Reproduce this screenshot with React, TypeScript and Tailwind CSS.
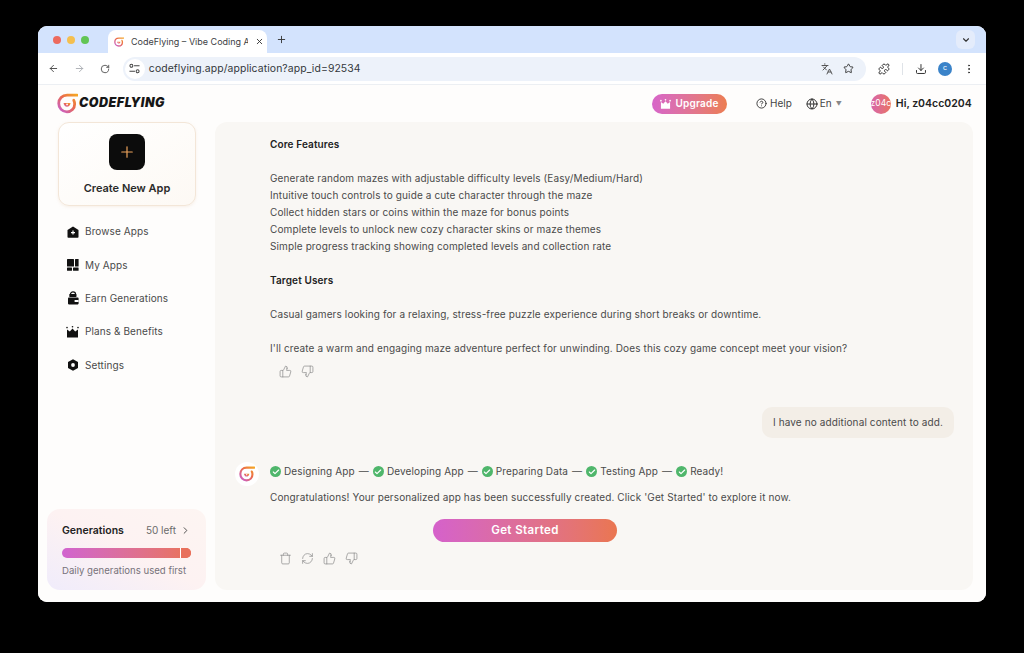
import React from 'react';
import {
  ArrowLeft,
  ArrowRight,
  RotateCw,
  Star,
  Puzzle,
  Download,
  EllipsisVertical,
  ChevronDown,
  ChevronRight,
  Plus,
  X,
  CircleHelp,
  Globe,
  ThumbsUp,
  ThumbsDown,
  Trash,
  RefreshCw,
  Check,
  Languages,
} from 'lucide-react';

const Logo = ({ size = 20 }: { size?: number }) => (
  <svg width={size} height={size} viewBox="0 0 24 24" fill="none">
    <defs>
      <linearGradient id="logoGrad" x1="0" y1="1" x2="1" y2="0">
        <stop offset="0" stopColor="#c65fd6" />
        <stop offset="0.55" stopColor="#ea6a4d" />
        <stop offset="1" stopColor="#f5a623" />
      </linearGradient>
    </defs>
    <path
      d="M23 2.5H11.5C6 2.5 2 6.5 2 12c0 5.3 4 9.5 9.3 9.5 5.2 0 8.9-3.9 8.9-9 0-1.6-.4-3-1-4.2"
      stroke="url(#logoGrad)"
      strokeWidth="3.2"
      strokeLinecap="round"
    />
    <path d="M7.5 11.5h8c-.3 2.6-2 4.3-4.2 4.3-2 0-3.5-1.8-3.8-4.3z" fill="url(#logoGrad)" />
    <circle cx="11.5" cy="13" r="1" fill="#fff" />
  </svg>
);

const BrowseIcon = () => (
  <svg width="12" height="12" viewBox="0 0 12 12" fill="#111">
    <path d="M6 .5l5.5 3.6V11a.8.8 0 0 1-.8.8H1.3A.8.8 0 0 1 .5 11V4.1L6 .5z" />
    <path d="M6 4.6v4M4 6.6h4" stroke="#fff" strokeWidth="1.2" />
  </svg>
);

const MyAppsIcon = () => (
  <svg width="12" height="12" viewBox="0 0 12 12" fill="#111">
    <rect x="0" y="0" width="7" height="7.4" rx=".5" />
    <rect x="8" y="0" width="3.6" height="7.4" rx=".5" />
    <rect x="0" y="8.4" width="5" height="3.4" rx=".5" />
    <rect x="6" y="8.4" width="5.6" height="3.4" rx=".5" />
  </svg>
);

const EarnIcon = () => (
  <svg width="12" height="14" viewBox="0 0 12 14" fill="#111">
    <path d="M3.4 5V3.4a2.6 2.6 0 0 1 5.2 0V5z" fill="none" stroke="#111" strokeWidth="1.2" />
    <rect x="2.4" y="3" width="7" height="3" rx=".5" />
    <rect x="1" y="6.6" width="10.6" height="6.8" rx=".8" />
    <rect x="7.6" y="9" width="4" height="2" fill="#fff" />
  </svg>
);

const PlansIcon = () => (
  <svg width="13" height="12" viewBox="0 0 13 12" fill="#111">
    <circle cx="1" cy="1.6" r=".8" />
    <circle cx="6.5" cy=".8" r=".8" />
    <circle cx="12" cy="1.6" r=".8" />
    <path d="M1 3.4l2.8 2.2L6.5 2.4l2.7 3.2L12 3.4v8.2H1z" />
  </svg>
);

const SettingsIcon = () => (
  <svg width="12" height="12" viewBox="0 0 12 12">
    <path d="M6 .2l5 2.9v5.8l-5 2.9-5-2.9V3.1z" fill="#111" />
    <circle cx="6" cy="6" r="1.9" fill="#fff" />
  </svg>
);

const Crown = () => (
  <svg width="11" height="10" viewBox="0 0 13 12" fill="#fff">
    <circle cx="1" cy="2" r="1" />
    <circle cx="6.5" cy="1" r="1" />
    <circle cx="12" cy="2" r="1" />
    <path d="M1 3.6l2.8 2.2L6.5 2.6l2.7 3.2L12 3.6v8H1z" />
  </svg>
);

const TuneIcon = () => (
  <svg width="11" height="11" viewBox="0 0 12 12" fill="none" stroke="#444" strokeWidth="1.1">
    <circle cx="2.6" cy="3" r="1.6" />
    <path d="M5.5 3H11.5M.5 9H6.5" />
    <circle cx="9.4" cy="9" r="1.6" />
  </svg>
);

const navItems = [
  { label: 'Browse Apps', icon: <BrowseIcon /> },
  { label: 'My Apps', icon: <MyAppsIcon /> },
  { label: 'Earn Generations', icon: <EarnIcon /> },
  { label: 'Plans & Benefits', icon: <PlansIcon /> },
  { label: 'Settings', icon: <SettingsIcon /> },
];

const features = [
  'Generate random mazes with adjustable difficulty levels (Easy/Medium/Hard)',
  'Intuitive touch controls to guide a cute character through the maze',
  'Collect hidden stars or coins within the maze for bonus points',
  'Complete levels to unlock new cozy character skins or maze themes',
  'Simple progress tracking showing completed levels and collection rate',
];

const steps = ['Designing App', 'Developing App', 'Preparing Data', 'Testing App'];

const Tick = () => (
  <span className="w-[11px] h-[11px] rounded-full bg-[#4fb66b] flex items-center justify-center shrink-0">
    <Check size={8} color="#fff" strokeWidth={3.5} />
  </span>
);

export default function App() {
  return (
    <div
      className="w-[1024px] h-[653px] bg-black pt-[26px] pl-[38px] overflow-hidden text-[#3d3d3d]"
      style={{ fontFamily: 'Inter, "Liberation Sans", sans-serif' }}
    >
      <div className="w-[948px] h-[576px] rounded-[9px] overflow-hidden bg-white flex flex-col">
        {/* tab strip */}
        <div className="h-[27px] bg-[#d3e3fd] flex items-end pl-[15px] pr-[11px] shrink-0">
          <div className="flex gap-[6px] self-center mr-[19px]">
            <span className="w-[8px] h-[8px] rounded-full bg-[#ec6a5e]" />
            <span className="w-[8px] h-[8px] rounded-full bg-[#f4bf4f]" />
            <span className="w-[8px] h-[8px] rounded-full bg-[#61c554]" />
          </div>
          <div className="w-[159px] h-[23px] bg-white rounded-t-[8px] flex items-center pl-[6px] pr-[3px] gap-[7px]">
            <Logo size={10} />
            <span className="text-[9px] text-[#3c4043] whitespace-nowrap overflow-hidden flex-1">
              CodeFlying – Vibe Coding App
            </span>
            <X size={9} color="#333" strokeWidth={2.4} />
          </div>
          <Plus size={11} color="#333" className="self-center ml-[9px]" />
          <div className="ml-auto self-center w-[19px] h-[19px] bg-[#e4ecfb] rounded-[6px] flex items-center justify-center">
            <ChevronDown size={10} color="#333" strokeWidth={2.6} />
          </div>
        </div>

        {/* toolbar */}
        <div className="h-[32px] bg-white border-b border-[#eceff3] flex items-center pl-[10px] pr-[11px] shrink-0">
          <ArrowLeft size={11} color="#444" />
          <ArrowRight size={11} color="#a9adb2" className="ml-[15px]" />
          <RotateCw size={10} color="#444" className="ml-[15px]" />
          <div className="ml-[13px] w-[747px] h-[24px] rounded-full bg-[#edf2fa] flex items-center pl-[2px] pr-[12px]">
            <span className="w-[20px] h-[20px] rounded-full bg-white flex items-center justify-center">
              <TuneIcon />
            </span>
            <span className="ml-[4px] text-[10.4px] text-[#33373b] tracking-[0.1px]">
              codeflying.app/application?app_id=92534
            </span>
            <Languages size={12} color="#555" className="ml-auto" />
            <Star size={11} color="#333" className="ml-[10px]" />
          </div>
          <Puzzle size={12} color="#333" className="ml-[12px]" />
          <span className="ml-[12px] w-px h-[12px] bg-[#dfe3e8]" />
          <Download size={12} color="#333" className="ml-[12px]" />
          <span className="ml-[11px] w-[14px] h-[14px] rounded-full bg-[#3a83c9] text-white text-[7px] flex items-center justify-center">
            c
          </span>
          <EllipsisVertical size={12} color="#333" className="ml-[11px]" />
        </div>

        {/* page */}
        <div className="flex-1 flex min-h-0 bg-[#fefdfc]">
          {/* sidebar */}
          <div className="w-[177px] shrink-0 flex flex-col pl-[9px] pr-[9px] pb-[12px]">
            <div className="h-[37px] flex items-center gap-[1px] pl-[10px] shrink-0">
              <Logo size={21} />
              <span className="text-[12.5px] font-black italic text-[#161616] tracking-[0.5px]">CODEFLYING</span>
            </div>
            <div className="ml-[11px] w-[138px] h-[84px] rounded-[11px] border border-[#f3e6d8] bg-gradient-to-br from-white to-[#fdf9f4] shadow-[0_1px_3px_rgba(230,200,170,0.25)] flex flex-col items-center pt-[11px] shrink-0">
              <div className="w-[36px] h-[36px] rounded-[8px] bg-[#0c0c0c] flex items-center justify-center">
                <Plus size={18} color="#eda35c" strokeWidth={1.6} />
              </div>
              <span className="mt-[10px] text-[11px] font-semibold text-[#2a2a2a]">Create New App</span>
            </div>
            <nav className="mt-[9px] flex flex-col pl-[19px]">
              {navItems.map((item) => (
                <div key={item.label} className="h-[33.4px] flex items-center gap-[6px]">
                  <span className="w-[13px] flex justify-center">{item.icon}</span>
                  <span className="text-[10px] text-[#4a4a4a] tracking-[0.1px]">{item.label}</span>
                </div>
              ))}
            </nav>
            <div className="mt-auto h-[81px] rounded-[13px] bg-gradient-to-tr from-[#f0ecfb] via-[#fdf2f2] to-[#fdf5f2] px-[15px] pt-[14px]">
              <div className="flex items-center">
                <span className="text-[10.5px] font-semibold text-[#222]">Generations</span>
                <span className="ml-auto text-[10px] text-[#6b6b6b]">50 left</span>
                <ChevronRight size={11} color="#444" className="ml-[4px]" />
              </div>
              <div className="mt-[9px] h-[10px] rounded-full overflow-hidden flex bg-gradient-to-r from-[#d163cf] to-[#ea7356]">
                <div className="ml-auto w-[11px] border-l border-white bg-[#e8705c]" />
              </div>
              <div className="mt-[6px] text-[9.6px] text-[#77727a] whitespace-nowrap">Daily generations used first</div>
            </div>
          </div>

          {/* right */}
          <div className="flex-1 flex flex-col min-w-0 pr-[13px] pb-[12px]">
            <div className="h-[37px] flex items-center shrink-0 pl-[437px]">
              <div className="w-[75px] h-[20px] rounded-full bg-gradient-to-r from-[#d765c9] to-[#ec7d50] flex items-center justify-center gap-[4px]">
                <Crown />
                <span className="text-[10px] font-semibold text-white tracking-[0.2px]">Upgrade</span>
              </div>
              <CircleHelp size={11} color="#333" className="ml-[29px]" />
              <span className="ml-[3px] text-[10px] text-[#444]">Help</span>
              <Globe size={12} color="#333" className="ml-[14px]" />
              <span className="ml-[2px] text-[10px] text-[#444]">En</span>
              <span className="ml-[4px] text-[6px] text-[#888]">▼</span>
              <span className="ml-[29px] w-[20px] h-[20px] rounded-full bg-gradient-to-r from-[#d765a9] to-[#ea7360] text-[8.5px] text-white overflow-hidden flex items-center justify-center">
                z04c
              </span>
              <span className="ml-[5px] text-[10.5px] font-semibold text-[#222]">Hi, z04cc0204</span>
            </div>

            <div className="flex-1 rounded-[12px] bg-[#f9f7f4] pl-[55px] pr-[19px] pt-[14px] text-[10px] leading-[17px] tracking-[0.12px] text-[#4a4a4a]">
              <p className="font-semibold text-[#222]">Core Features</p>
              <div className="mt-[17px]">
                {features.map((line) => (
                  <p key={line}>{line}</p>
                ))}
              </div>
              <p className="mt-[17px] font-semibold text-[#222]">Target Users</p>
              <p className="mt-[17px]">
                Casual gamers looking for a relaxing, stress-free puzzle experience during short breaks or downtime.
              </p>
              <p className="mt-[17px]">
                I'll create a warm and engaging maze adventure perfect for unwinding. Does this cozy game concept meet your vision?
              </p>
              <div className="mt-[8px] ml-[9px] flex items-center gap-[9px] text-[#8a8a8a]">
                <ThumbsUp size={13} strokeWidth={1.3} />
                <ThumbsDown size={13} strokeWidth={1.3} />
              </div>

              <div className="mt-[29px] flex justify-end">
                <div className="h-[31px] px-[11px] rounded-[10px] bg-[#f3eee7] flex items-center text-[#4a4a4a]">
                  I have no additional content to add.
                </div>
              </div>

              <div className="relative mt-[25px]">
                <div className="absolute left-[-35px] top-[-1px] w-[24px] h-[24px] rounded-full bg-white flex items-center justify-center">
                  <Logo size={16} />
                </div>
                <div className="flex items-center gap-[3px]">
                  {steps.map((s) => (
                    <React.Fragment key={s}>
                      <Tick />
                      <span>{s}</span>
                      <span className="mx-[1px]">—</span>
                    </React.Fragment>
                  ))}
                  <Tick />
                  <span>Ready!</span>
                </div>
                <p className="mt-[9px]">
                  Congratulations! Your personalized app has been successfully created. Click 'Get Started' to explore it now.
                </p>
                <div className="mt-[13px] ml-[163px] w-[184px] h-[23px] rounded-full bg-gradient-to-r from-[#d561cb] to-[#ea7650] flex items-center justify-center text-[11.5px] font-semibold text-white tracking-[0.4px]">
                  Get Started
                </div>
                <div className="mt-[10px] ml-[9px] flex items-center gap-[9px] text-[#8a8a8a]">
                  <Trash size={13} strokeWidth={1.3} />
                  <RefreshCw size={13} strokeWidth={1.3} />
                  <ThumbsUp size={13} strokeWidth={1.3} />
                  <ThumbsDown size={13} strokeWidth={1.3} />
                </div>
              </div>
            </div>
          </div>
        </div>
      </div>
    </div>
  );
}
